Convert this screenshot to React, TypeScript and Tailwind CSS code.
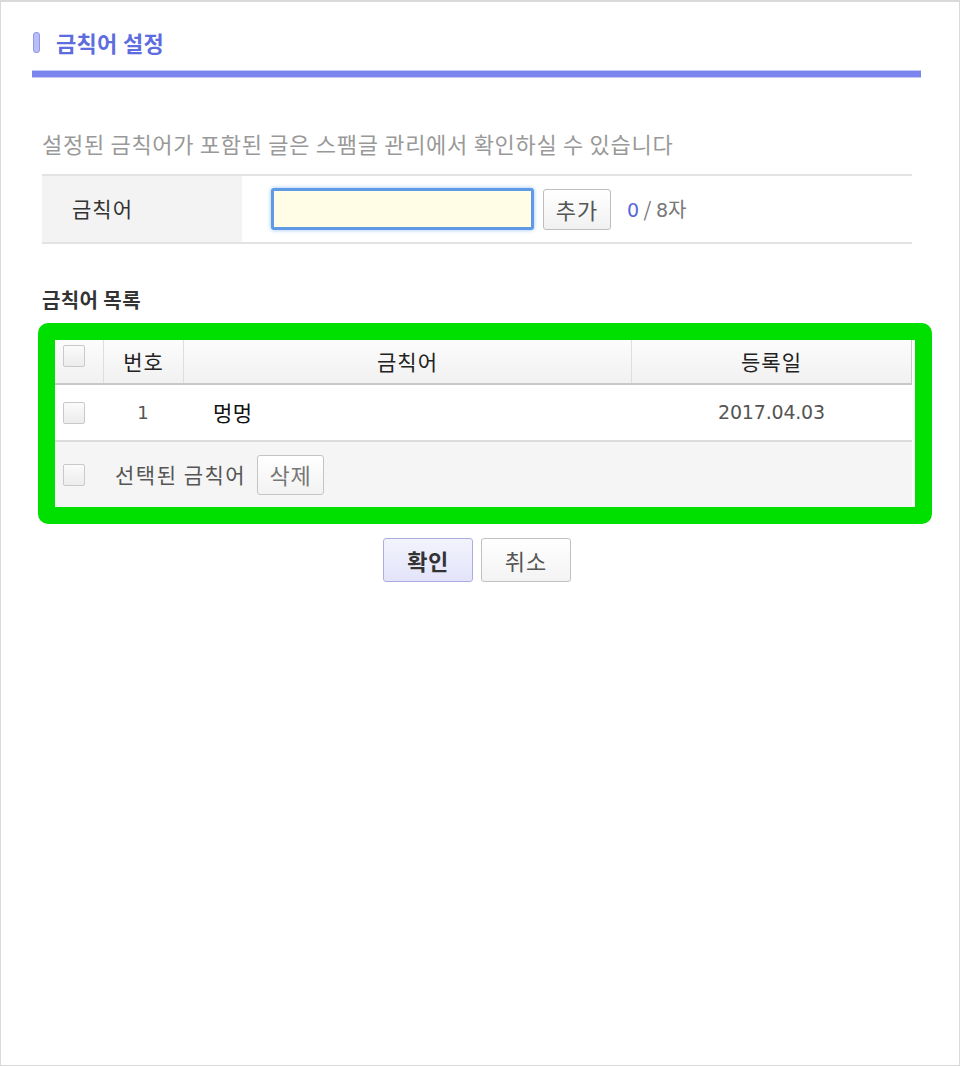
import React from "react";

const Checkbox: React.FC = () => (
    <span className="block h-[22px] w-[22px] rounded-[2px] border border-[#c9c9c9] bg-gradient-to-b from-[#fbfbfb] to-[#ececec]"/>
);

const words = [{no: 1, word: "멍멍", date: "2017.04.03"}];

export default function App() {
    return (
        <div
            className="h-[1066px] w-[960px] border border-t-2 border-[#d9d9d9] bg-white pl-[31px] pr-[38px] pt-[29px] font-['Noto_Sans_CJK_KR',sans-serif]">
            {/* title */}
            <div className="flex h-[22px] items-center">
                <span className="ml-[1px] h-[21px] w-[7px] rounded-[3px] border border-[#8f97ea] bg-[#b9bff6]"/>
                <h1 className="ml-[16px] text-[22px] leading-none font-bold tracking-[0.3px] text-[#5d6de0]">
                    금칙어 설정
                </h1>
            </div>
            <div className="mt-[17px] h-[8px] border-y border-[#c3c7f7] bg-[#7c84ee]"/>

            <div className="ml-[10px] mr-[9px]">
                <p className="mt-[50px] text-[22px] leading-[30px] tracking-[0.7px] text-[#999]">
                    설정된 금칙어가 포함된 글은 스팸글 관리에서 확인하실 수 있습니다
                </p>

                {/* input row */}
                <div className="mt-[16px] flex h-[70px] items-center border-y-2 border-[#e3e3e3]">
                    <div className="flex h-full w-[200px] items-center bg-[#f3f3f3] pl-[30px] text-[21px] tracking-[1px] text-[#333]">
                        금칙어
                    </div>
                    <input
                        className="ml-[29px] h-[42px] w-[263px] rounded-[3px] border-[3px] border-[#5e9ae6] bg-[#fffde6] px-2 shadow-[0_0_4px_#9cc4f5] outline-none"/>
                    <button
                        className="ml-[9px] h-[41px] w-[68px] rounded-[3px] border border-[#bdbdbd] bg-gradient-to-b from-white to-[#f1f1f1] text-[22px] tracking-[1px] text-[#555]">
                        추가
                    </button>
                    <span className="ml-[16px] text-[20px] text-[#777]">
                        <span className="font-['DejaVu_Sans',sans-serif] text-[19px] text-[#5766dc]">0</span>
                        {" "}/{" "}
                        <span className="font-['DejaVu_Sans',sans-serif] text-[19px]">8</span>자
                    </span>
                </div>

                <h2 className="mt-[44px] text-[20px] leading-[24px] font-bold tracking-[0.4px] text-[#333]">
                    금칙어 목록
                </h2>

                {/* list */}
                <div className="mt-[11px] -ml-[4px] w-[894px] rounded-[10px] border-[17px] border-[#00e000] bg-white">
                    <div className="mr-[3px]">
                        <div
                            className="flex h-[45px] items-center border-r border-b-2 border-[#c8c8c8] bg-gradient-to-b from-[#fcfcfc] to-[#f1f1f1] text-[21px] tracking-[1px] text-[#222]">
                            <div className="flex h-full w-[48px] items-start pt-[5px] pl-[8px]">
                                <Checkbox/>
                            </div>
                            <div className="flex h-full w-[80px] items-center justify-center border-l border-[#dedede]">번호</div>
                            <div className="flex h-full w-[448px] items-center justify-center border-l border-[#dedede]">금칙어</div>
                            <div className="flex h-full flex-1 items-center justify-center border-l border-[#dedede]">등록일</div>
                        </div>

                        {words.map((w) => (
                            <div key={w.no} className="flex h-[57px] items-center border-b-2 border-[#dcdcdc] bg-white">
                                <div className="w-[48px] pl-[8px]">
                                    <Checkbox/>
                                </div>
                                <div className="w-[80px] text-center font-['DejaVu_Sans',sans-serif] text-[18px] text-[#555]">
                                    {w.no}
                                </div>
                                <div className="w-[448px] pl-[30px] text-[21px] tracking-[0.5px] text-[#111]">{w.word}</div>
                                <div className="flex-1 text-center font-['DejaVu_Sans',sans-serif] text-[19px] tracking-[-0.2px] text-[#555]">
                                    {w.date}
                                </div>
                            </div>
                        ))}

                        <div className="flex h-[65px] items-center bg-[#f5f5f5] pl-[8px]">
                            <Checkbox/>
                            <span className="ml-[30px] text-[21px] tracking-[1.5px] text-[#555]">선택된 금칙어</span>
                            <button
                                className="ml-[11px] h-[40px] w-[67px] rounded-[3px] border border-[#c4c4c4] bg-gradient-to-b from-white to-[#f2f2f2] text-[22px] tracking-[1px] text-[#777]">
                                삭제
                            </button>
                        </div>
                    </div>
                </div>

                {/* actions */}
                <div className="mt-[14px] flex justify-center gap-[8px]">
                    <button
                        className="h-[44px] w-[90px] rounded-[3px] border border-[#a9addf] bg-gradient-to-b from-[#f3f3fd] to-[#e3e4fa] text-[22px] font-bold tracking-[0.5px] text-[#333]">
                        확인
                    </button>
                    <button
                        className="h-[44px] w-[90px] rounded-[3px] border border-[#c0c0c0] bg-gradient-to-b from-white to-[#f3f3f3] text-[22px] tracking-[1px] text-[#555]">
                        취소
                    </button>
                </div>
            </div>
        </div>
    );
}
